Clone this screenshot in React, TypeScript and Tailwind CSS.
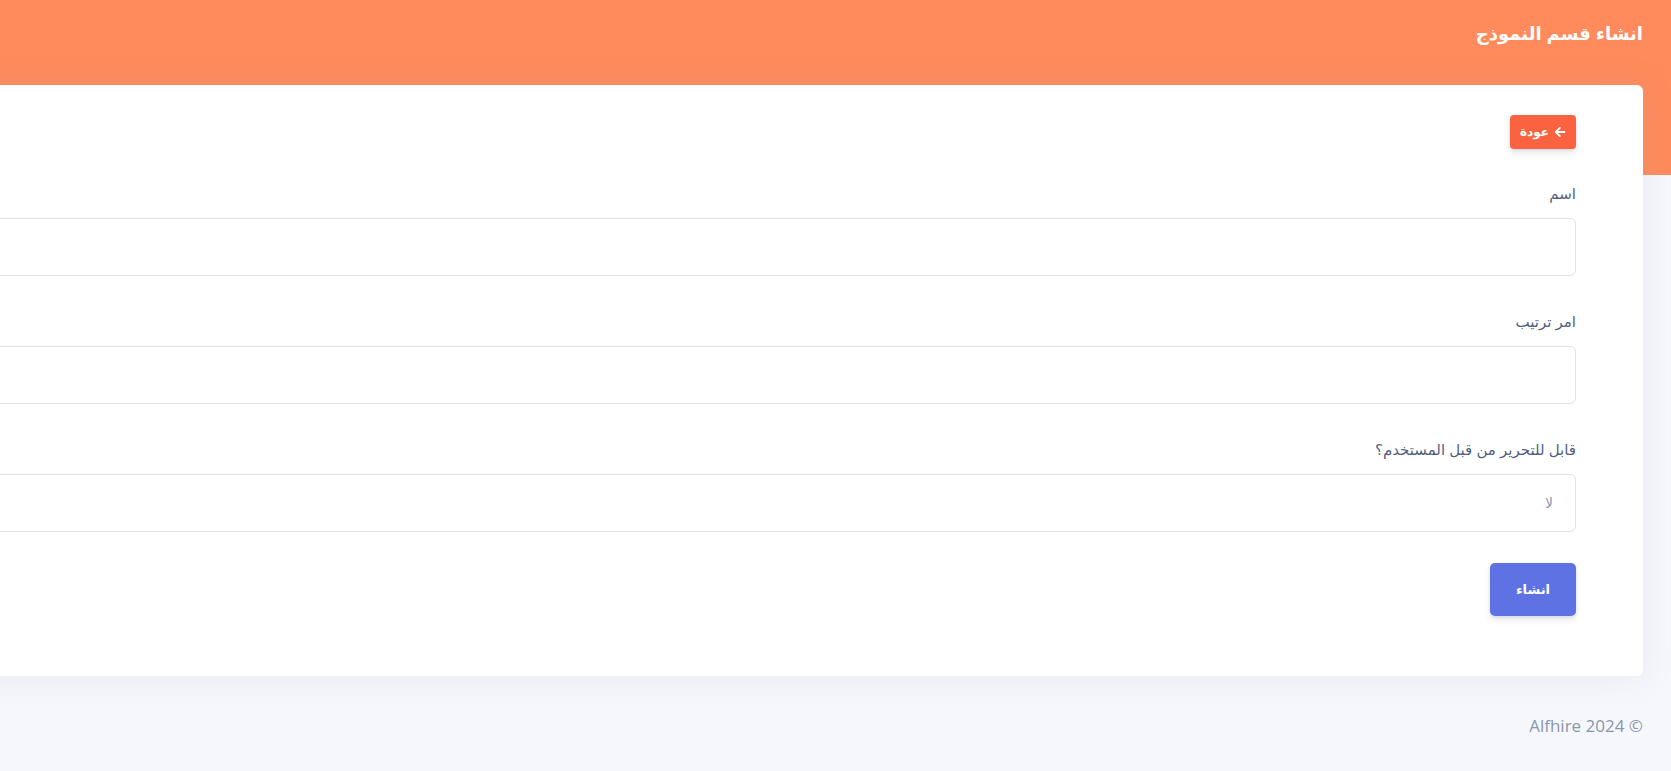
import { FaArrowLeft } from "react-icons/fa";

const arabic = "font-['Liberation_Sans','DejaVu_Sans',sans-serif]";

function Field({ label, children }: { label: string; children: React.ReactNode }) {
  return (
    <div className="mb-[35px]">
      <label className="block text-[15px] leading-[21px] text-[#525f7f] mb-[14px]">{label}</label>
      {children}
    </div>
  );
}

export default function App() {
  return (
    <div dir="rtl" className={`min-h-screen overflow-hidden bg-[#f6f7fc] ${arabic}`}>
      <header className="h-[175px] bg-[#ff8b5c] pt-[21px] pr-[28px]">
        <h1 className="text-[18px] leading-[27px] font-bold text-white">انشاء قسم النموذج</h1>
      </header>

      <main className="-mt-[90px] pr-[28px]">
        <div className="ml-[-100px] rounded-[6px] bg-white shadow-[0_0_2rem_0_rgba(136,152,170,0.15)] pt-[30px] pb-[60px] pr-[67px] pl-[67px]">
          <div className="flex mb-[34px]">
            <button className="flex items-center gap-[5px] h-[34px] px-[10px] rounded-[4px] bg-[#fb6340] text-white text-[12px] font-bold shadow-[0_4px_6px_rgba(50,50,93,0.11),0_1px_3px_rgba(0,0,0,0.08)]">
              <FaArrowLeft className="w-[12px] h-[12px]" />
              <span>عودة</span>
            </button>
          </div>

          <form>
            <Field label="اسم">
              <input className="block w-full h-[58px] rounded-[6px] border border-[#dee2e6] bg-white px-[20px] text-[14px] outline-none" />
            </Field>
            <Field label="امر ترتيب">
              <input className="block w-full h-[58px] rounded-[6px] border border-[#dee2e6] bg-white px-[20px] text-[14px] outline-none" />
            </Field>
            <div className="mb-[31px]">
              <label className="block text-[15px] leading-[21px] text-[#525f7f] mb-[14px]">قابل للتحرير من قبل المستخدم؟</label>
              <div className="flex items-center h-[58px] rounded-[6px] border border-[#dee2e6] bg-white pr-[22px] text-[14px] text-[#8898aa]">
                لا
              </div>
            </div>
            <button
              type="button"
              className="h-[53px] w-[86px] rounded-[5px] bg-[#5e72e4] text-white text-[13px] font-bold shadow-[0_4px_6px_rgba(50,50,93,0.11),0_1px_3px_rgba(0,0,0,0.08)]"
            >
              انشاء
            </button>
          </form>
        </div>
      </main>

      <footer className="pr-[28px] pt-[38px] pb-[30px]">
        <p dir="ltr" className="text-right text-[17px] leading-[24px] text-[#8898aa] font-['Open_Sans',sans-serif]">
          Alfhire 2024 ©
        </p>
      </footer>
    </div>
  );
}
